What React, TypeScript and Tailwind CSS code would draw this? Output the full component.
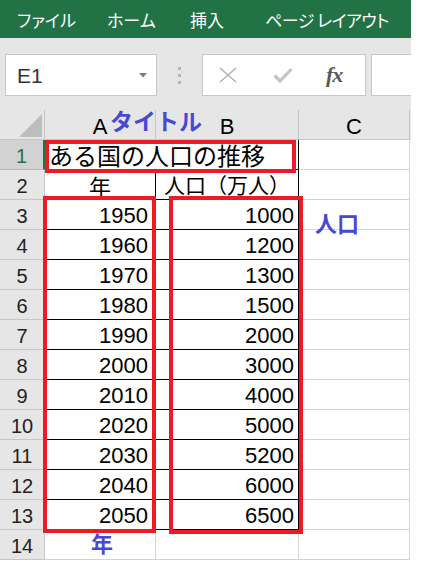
import React from 'react';

const JP = "font-['Noto_Sans_CJK_JP',sans-serif]";
const NUM = "font-['Liberation_Sans','Noto_Sans_CJK_JP',sans-serif]";

const years = [1950, 1960, 1970, 1980, 1990, 2000, 2010, 2020, 2030, 2040, 2050];
const pops = [1000, 1200, 1300, 1500, 2000, 3000, 4000, 5000, 5200, 6000, 6500];

const Ribbon = () => (
  <div className={`h-[38px] bg-[#217346] flex items-center pl-[17px] text-white text-[17px] leading-none [font-feature-settings:'palt'] ${JP}`}>
    <span className="w-[90px]">ファイル</span>
    <span className="w-[83px]">ホーム</span>
    <span className="w-[75px]">挿入</span>
    <span className="whitespace-nowrap tracking-[-0.5px]">ページ レイアウト</span>
  </div>
);

const Toolbar = () => (
  <div className="h-[72px] bg-[#e6e6e6] flex items-start pt-[16px]">
    <div className="ml-[5px] w-[152px] h-[42px] bg-white border border-[#c6c6c6] flex items-center justify-between pl-[11px] pr-[9px]">
      <span className={`text-[21px] leading-none text-[#333] ${NUM}`}>E1</span>
      <svg width="8" height="5" viewBox="0 0 8 5">
        <polygon points="0,0 8,0 4,4.5" fill="#7a7a7a" />
      </svg>
    </div>
    <div className="w-[45px] h-[42px] flex flex-col items-center justify-center gap-[4px]">
      <div className="w-[3px] h-[3px] bg-[#b5b5b5]" />
      <div className="w-[3px] h-[3px] bg-[#b5b5b5]" />
      <div className="w-[3px] h-[3px] bg-[#b5b5b5]" />
    </div>
    <div className="w-[164px] h-[42px] bg-white border border-[#c6c6c6] flex items-center pl-[16px]">
      <svg width="18" height="16" viewBox="0 0 18 16">
        <path d="M1 1 L17 15 M17 1 L1 15" stroke="#b3b3b3" strokeWidth="1.6" />
      </svg>
      <svg className="ml-[36px]" width="20" height="16" viewBox="0 0 20 16">
        <path d="M1.5 8.5 L7 14 L18.5 2" stroke="#c4c4c4" strokeWidth="3.2" fill="none" />
      </svg>
      <span className="ml-[33px] text-[22px] italic font-bold text-[#595959] leading-none font-['Liberation_Serif',serif] tracking-[-1px]">
        fx
      </span>
    </div>
    <div className="ml-[5px] flex-1 h-[42px] bg-white border border-r-0 border-[#c6c6c6]" />
  </div>
);

const HeaderRow = () => (
  <div className="flex h-[30px] bg-[#e6e6e6]">
    <div className="w-[45px] border-r border-b border-[#c6c6c6] flex items-end justify-end pr-[2px] pb-[2px]">
      <svg width="23" height="23" viewBox="0 0 23 23">
        <polygon points="23,0 23,23 0,23" fill="#bdbdbd" />
      </svg>
    </div>
    {['A', 'B', 'C'].map((c, i) => (
      <div
        key={c}
        className={`${i === 0 ? 'w-[111px]' : i === 1 ? 'w-[143px]' : 'w-[111px]'} border-r border-b border-[#c6c6c6] flex items-center justify-center pt-[4px] text-[22px] leading-none text-black ${NUM}`}
      >
        {c}
      </div>
    ))}
  </div>
);

const RowHead = ({ n, active }: { n: number; active?: boolean }) => (
  <div
    className={`w-[45px] flex items-center justify-center text-[20px] leading-none pt-[2px] border-b ${NUM} ${
      active
        ? 'bg-[#d2d2d2] text-[#217346] border-[#b8b8b8] border-r-2 border-r-[#217346]'
        : 'bg-[#e6e6e6] text-[#222] border-[#c6c6c6] border-r border-r-[#c6c6c6]'
    }`}
  >
    {n}
  </div>
);

const App = () => {
  return (
    <div className="w-[428px] h-[574px] bg-white relative overflow-hidden">
      <div className="w-[411px]">
        <Ribbon />
        <Toolbar />
        <div className="bg-white">
          <HeaderRow />

          {/* row 1 */}
          <div className="flex h-[30px]">
            <RowHead n={1} active />
            <div className="w-[111px] border-b border-black relative">
              <span className={`absolute left-[4px] top-0 h-full flex items-center text-[24px] leading-none whitespace-nowrap text-black z-10 ${JP}`}>
                ある国の人口の推移
              </span>
            </div>
            <div className="w-[143px] border-r border-b border-r-black border-b-black" />
            <div className="w-[111px] border-r border-b border-[#d4d4d4]" />
          </div>

          {/* row 2 */}
          <div className="flex h-[30px]">
            <RowHead n={2} />
            <div className={`w-[111px] border-r border-b border-black flex items-center justify-center text-[22px] leading-none text-black ${JP}`}>
              年
            </div>
            <div className={`w-[143px] border-r border-b border-black flex items-center justify-center text-[21px] leading-none text-black ${JP}`}>
              人口（万人）
            </div>
            <div className="w-[111px] border-r border-b border-[#d4d4d4]" />
          </div>

          {years.map((y, i) => (
            <div key={y} className="flex h-[30px]">
              <RowHead n={i + 3} />
              <div className={`w-[111px] border-r border-b border-black flex items-center justify-end pr-[7px] pt-[2px] text-[22px] leading-none text-black ${NUM}`}>
                {y}
              </div>
              <div className={`w-[143px] border-r border-b border-black flex items-center justify-end pr-[4px] pt-[2px] text-[22px] leading-none text-black ${NUM}`}>
                {pops[i]}
              </div>
              <div className="w-[111px] border-r border-b border-[#d4d4d4]" />
            </div>
          ))}

          {/* row 14 */}
          <div className="flex h-[30px]">
            <RowHead n={14} />
            <div className="w-[111px] border-r border-b border-[#d4d4d4]" />
            <div className="w-[143px] border-r border-b border-[#d4d4d4]" />
            <div className="w-[111px] border-r border-b border-[#d4d4d4]" />
          </div>
        </div>
      </div>

      {/* annotations */}
      <div className="absolute left-[45px] top-[140px] w-[251px] h-[33px] border-4 border-[#ed1c24] z-20" />
      <div className="absolute left-[43px] top-[196px] w-[113px] h-[337px] border-4 border-[#ed1c24] z-20" />
      <div className="absolute left-[169px] top-[196px] w-[134px] h-[338px] border-4 border-[#ed1c24] z-20" />

      <span className={`absolute left-[110px] top-[109px] text-[23px] leading-none font-bold text-[#4848d4] z-20 ${JP}`}>
        タイトル
      </span>
      <span className={`absolute left-[315px] top-[211px] text-[22px] leading-none font-bold text-[#4848d4] z-20 ${JP}`}>
        人口
      </span>
      <span className={`absolute left-[91px] top-[531px] text-[22px] leading-none font-bold text-[#4848d4] z-20 ${JP}`}>
        年
      </span>
    </div>
  );
};

export default App;
